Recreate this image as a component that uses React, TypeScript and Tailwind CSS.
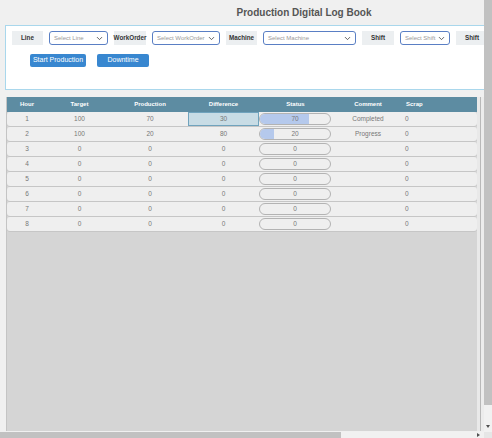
import { ChevronDown } from "lucide-react";

const rows = [
  { hour: 1, target: 100, production: 70, diff: 30, status: 70, comment: "Completed", scrap: 0 },
  { hour: 2, target: 100, production: 20, diff: 80, status: 20, comment: "Progress", scrap: 0 },
  { hour: 3, target: 0, production: 0, diff: 0, status: 0, comment: "", scrap: 0 },
  { hour: 4, target: 0, production: 0, diff: 0, status: 0, comment: "", scrap: 0 },
  { hour: 5, target: 0, production: 0, diff: 0, status: 0, comment: "", scrap: 0 },
  { hour: 6, target: 0, production: 0, diff: 0, status: 0, comment: "", scrap: 0 },
  { hour: 7, target: 0, production: 0, diff: 0, status: 0, comment: "", scrap: 0 },
  { hour: 8, target: 0, production: 0, diff: 0, status: 0, comment: "", scrap: 0 },
];

const cols = "grid grid-cols-[40px_65px_76px_71px_73px_72px_72px]";

function Label({ text, w }: { text: string; w: string }) {
  return (
    <div className={`${w} h-[14px] flex items-center justify-center bg-[#eceff1] text-[6.3px] font-bold text-[#333]`}>
      {text}
    </div>
  );
}

function Select({ text, w }: { text: string; w: string }) {
  return (
    <div className={`${w} h-[14px] flex items-center justify-between pl-[4px] pr-[3px] bg-white border border-[#5a7fc4] rounded-[3px] text-[6px] text-[#999]`}>
      <span className="whitespace-nowrap">{text}</span>
      <ChevronDown size={9} strokeWidth={2.2} className="shrink-0 text-[#444]" />
    </div>
  );
}

export default function App() {
  return (
    <div className="w-[492px] h-[438px] flex flex-col overflow-hidden bg-[#f0f0f0] font-['Liberation_Sans',Arial,sans-serif]">
      <div className="flex flex-1 min-h-0">
        <div className="flex-1 min-w-0 overflow-hidden">
          <div className="w-[608px] h-full flex flex-col">
            <h1 className="h-[25px] pt-[5px] text-center text-[10px] font-bold text-[#555]">
              Production Digital Log Book
            </h1>

            <div className="ml-[5px] w-[598px] h-[65px] bg-white border border-[#a9d7ec]">
              <div className="flex items-center gap-[6px] pt-[5px] pl-[6px]">
                <Label text="Line" w="w-[31px]" />
                <Select text="Select Line" w="w-[59px]" />
                <Label text="WorkOrder" w="w-[32px]" />
                <Select text="Select WorkOrder" w="w-[68px]" />
                <Label text="Machine" w="w-[31px]" />
                <Select text="Select Machine" w="w-[93px]" />
                <Label text="Shift" w="w-[32px]" />
                <Select text="Select Shift" w="w-[50px]" />
                <Label text="Shift" w="w-[32px]" />
              </div>
              <div className="flex gap-[11px] pl-[24px] pt-[9px]">
                <button className="w-[56px] h-[13px] bg-[#3887d0] rounded-[2px] text-white text-[7px]">
                  Start Production
                </button>
                <button className="w-[52px] h-[13px] bg-[#3887d0] rounded-[2px] text-white text-[7px]">
                  Downtime
                </button>
              </div>
            </div>

            <div className="mt-[7px] ml-[6px] w-[478px] flex-1 flex">
              <div className="w-[471px] bg-[#d5d5d5] border-l border-[#c4c4c4] flex flex-col">
                <div className={`${cols} h-[15px] bg-[#5d8ca2] items-center text-[6px] font-bold text-white`}>
                  <div className="text-center">Hour</div>
                  <div className="text-center">Target</div>
                  <div className="text-center">Production</div>
                  <div className="text-center">Difference</div>
                  <div className="text-center">Status</div>
                  <div className="text-center">Comment</div>
                  <div className="pl-[2px]">Scrap</div>
                </div>
                {rows.map((r) => (
                  <div
                    key={r.hour}
                    className={`${cols} h-[14px] mb-[1px] bg-[#efefef] rounded-[3px] shadow-[0_1px_0_#c6c6c6] items-center text-[6.5px] text-[#777]`}
                  >
                    <div className="text-center">{r.hour}</div>
                    <div className="text-center">{r.target}</div>
                    <div className="text-center">{r.production}</div>
                    <div
                      className={`h-full flex items-center justify-center ${
                        r.hour === 1 ? "bg-[#c8dce5] border border-[#70a3bd]" : ""
                      }`}
                    >
                      {r.diff}
                    </div>
                    <div className="relative h-[12px] w-[72px] rounded-full border border-[#b3b3b3] overflow-hidden flex items-center justify-center">
                      <div
                        className="absolute left-0 top-0 bottom-0 bg-[#b5c9ec]"
                        style={{ width: `${r.status}%` }}
                      />
                      <span className="relative">{r.status}</span>
                    </div>
                    <div className="text-center">{r.comment}</div>
                    <div className="pl-[1px]">{r.scrap}</div>
                  </div>
                ))}
              </div>
              <div className="w-[7px] flex">
                <div className="w-[3px] bg-[#e9e9e9]" />
                <div className="w-[1px] bg-[#b8b8b8]" />
                <div className="w-[3px] bg-[#ececec]" />
              </div>
            </div>
            <div className="h-[1px]" />
          </div>
        </div>

        <div className="w-[8px] flex flex-col bg-[#f1f1f1]">
          <div className="h-[405px] bg-[#c1c1c1]" />
          <div className="flex-1 flex items-end justify-center pb-[4px]">
            <div className="w-0 h-0 border-l-[2px] border-r-[2px] border-t-[3px] border-l-transparent border-r-transparent border-t-[#505050]" />
          </div>
        </div>
      </div>

      <div className="h-[6px] flex bg-[#f1f1f1]">
        <div className="w-[341px] bg-[#c1c1c1]" />
        <div className="flex-1 flex items-center justify-end pr-[4px]">
          <div className="w-0 h-0 border-t-[2px] border-b-[2px] border-l-[3px] border-t-transparent border-b-transparent border-l-[#505050]" />
        </div>
        <div className="w-[8px] bg-[#e6e6e6]" />
      </div>
    </div>
  );
}
